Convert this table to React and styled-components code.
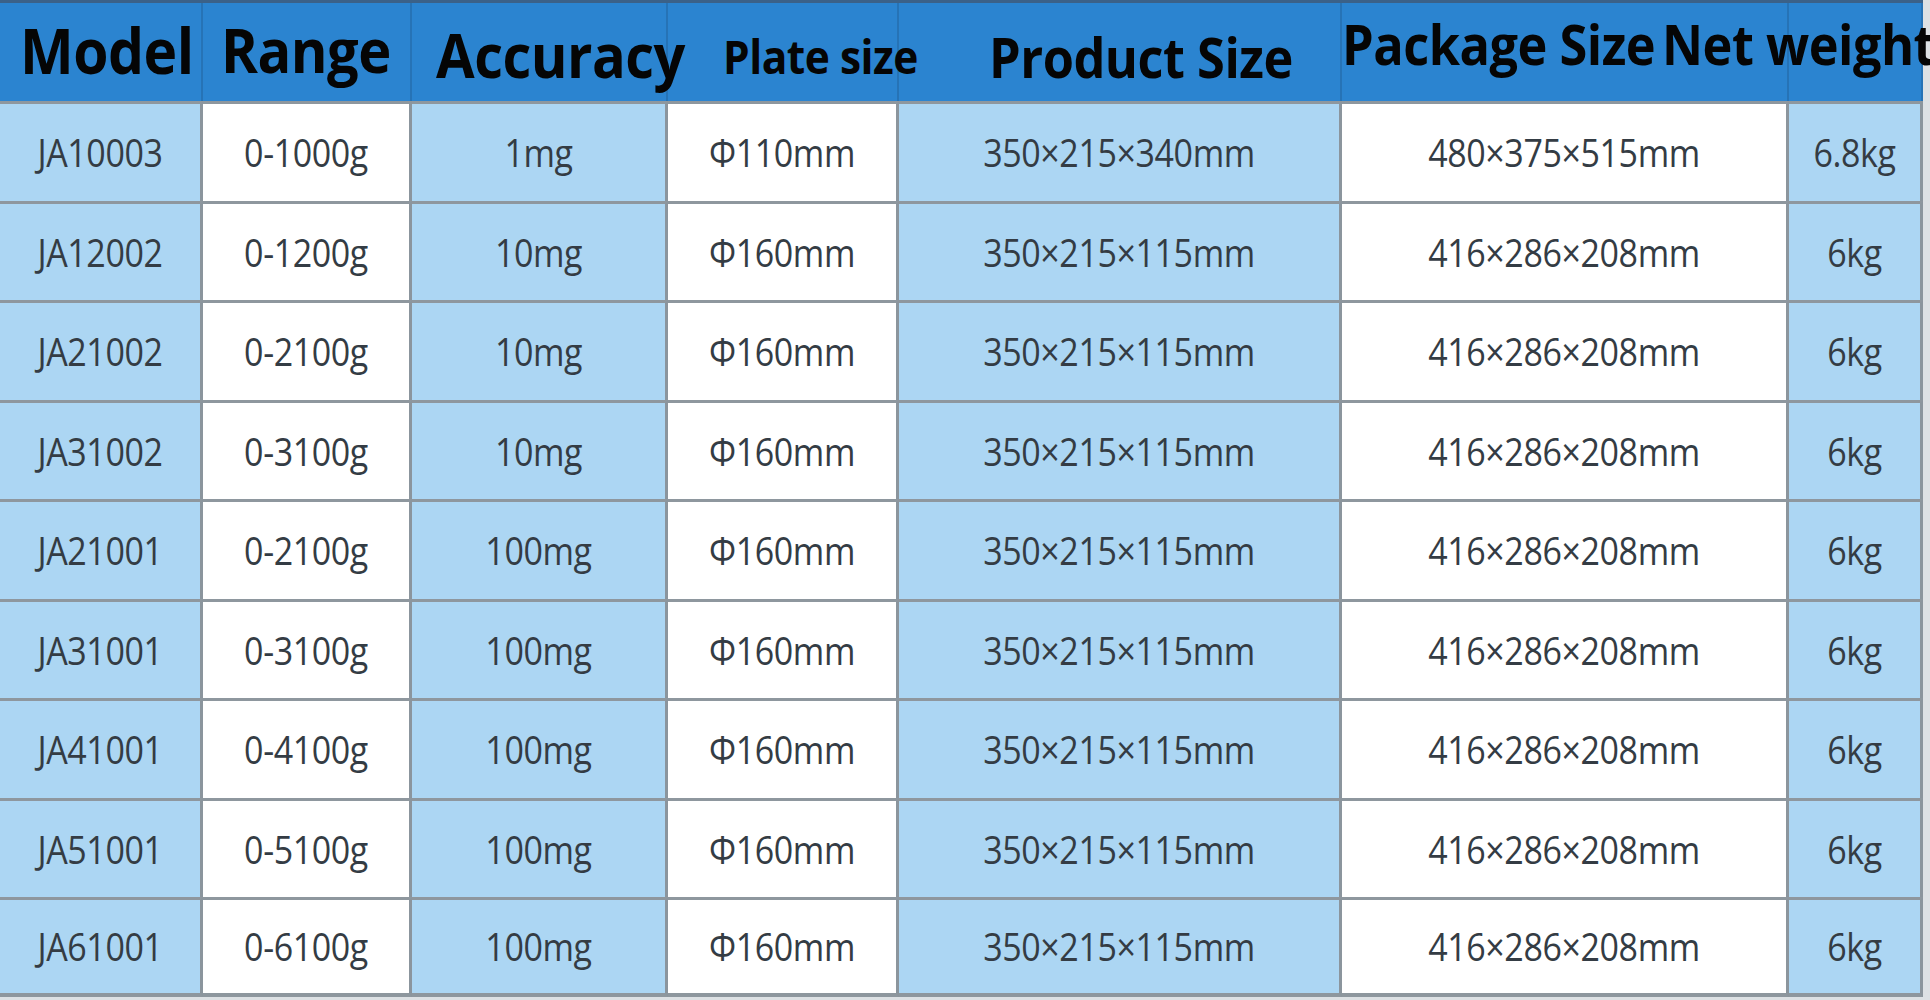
import styled, { createGlobalStyle } from "styled-components";

const GlobalStyle = createGlobalStyle`
  html, body {
    margin: 0;
    padding: 0;
    background: #dde1e4;
    overflow: hidden;
  }
  body {
    font-family: "Open Sans", "Noto Sans", sans-serif;
  }
`;

const columns = [
  { key: "model", label: "Model", tone: "blue", width: 203, pad: 20, size: 57, lift: -2 },
  { key: "range", label: "Range", tone: "white", width: 209, pad: 18, size: 56, lift: -3 },
  { key: "accuracy", label: "Accuracy", tone: "blue", width: 256, pad: 24, size: 56, lift: 2 },
  { key: "plate", label: "Plate size", tone: "white", width: 231, pad: 55, size: 42.5, lift: 4 },
  { key: "product", label: "Product Size", tone: "blue", width: 443, pad: 90, size: 50.5, lift: 5 },
  { key: "package", label: "Package Size", tone: "white", width: 447, pad: 0, size: 50.5, lift: -8 },
  { key: "net", label: "Net weight", tone: "blue", width: 134, pad: -127, size: 50.5, lift: -8 },
];

const rows = [
  ["JA10003", "0-1000g", "1mg", "Φ110mm", "350×215×340mm", "480×375×515mm", "6.8kg"],
  ["JA12002", "0-1200g", "10mg", "Φ160mm", "350×215×115mm", "416×286×208mm", "6kg"],
  ["JA21002", "0-2100g", "10mg", "Φ160mm", "350×215×115mm", "416×286×208mm", "6kg"],
  ["JA31002", "0-3100g", "10mg", "Φ160mm", "350×215×115mm", "416×286×208mm", "6kg"],
  ["JA21001", "0-2100g", "100mg", "Φ160mm", "350×215×115mm", "416×286×208mm", "6kg"],
  ["JA31001", "0-3100g", "100mg", "Φ160mm", "350×215×115mm", "416×286×208mm", "6kg"],
  ["JA41001", "0-4100g", "100mg", "Φ160mm", "350×215×115mm", "416×286×208mm", "6kg"],
  ["JA51001", "0-5100g", "100mg", "Φ160mm", "350×215×115mm", "416×286×208mm", "6kg"],
  ["JA61001", "0-6100g", "100mg", "Φ160mm", "350×215×115mm", "416×286×208mm", "6kg"],
];

const SpecTable = styled.div`
  display: grid;
  grid-template-columns: ${({ $cols }) => $cols};
  grid-template-rows: 98px repeat(9, 99.5px);
  width: 1923px;
  border-top: 3px solid #3b6188;
  box-sizing: border-box;
`;

const HeadCell = styled.div`
  background: #2b84d0;
  border-right: 2px solid #2673b6;
  display: flex;
  align-items: center;
  padding-left: ${({ $pad }) => Math.max($pad, 0)}px;
  white-space: nowrap;
  overflow: visible;
  min-width: 0;
`;

const HeadLabel = styled.span`
  display: inline-block;
  font-family: "Open Sans", "Noto Sans", sans-serif;
  font-weight: 700;
  font-size: ${({ $size }) => $size}px;
  line-height: 1;
  color: #050505;
  margin-left: ${({ $pad }) => Math.min($pad, 0)}px;
  margin-top: ${({ $lift }) => $lift * 2}px;
  letter-spacing: -0.5px;
  transform: scaleY(1.1);
  transform-origin: left center;
`;

const Cell = styled.div`
  background: ${({ $tone }) => ($tone === "blue" ? "#acd6f3" : "#ffffff")};
  border-top: 3px solid #8e979e;
  border-right: 3px solid #8b959d;
  display: flex;
  align-items: center;
  justify-content: center;
  box-sizing: border-box;
  white-space: nowrap;
  ${({ $last }) => ($last ? "border-bottom: 4px solid #8e979e;" : "")}
`;

const CellText = styled.span`
  display: inline-block;
  font-family: "Open Sans", "Noto Sans", sans-serif;
  font-size: 34px;
  color: #343c44;
  letter-spacing: -0.4px;
  transform: scaleY(1.12);
`;

export default function App() {
  const template = columns.map((c) => `${c.width}px`).join(" ");
  return (
    <>
      <GlobalStyle />
      <SpecTable $cols={template}>
        {columns.map((c) => (
          <HeadCell key={c.key} $pad={c.pad}>
            <HeadLabel $size={c.size} $pad={c.pad} $lift={c.lift}>
              {c.label}
            </HeadLabel>
          </HeadCell>
        ))}
        {rows.map((row, ri) =>
          row.map((value, ci) => (
            <Cell
              key={`${ri}-${ci}`}
              $tone={columns[ci].tone}
              $last={ri === rows.length - 1}
            >
              <CellText>{value}</CellText>
            </Cell>
          ))
        )}
      </SpecTable>
    </>
  );
}
